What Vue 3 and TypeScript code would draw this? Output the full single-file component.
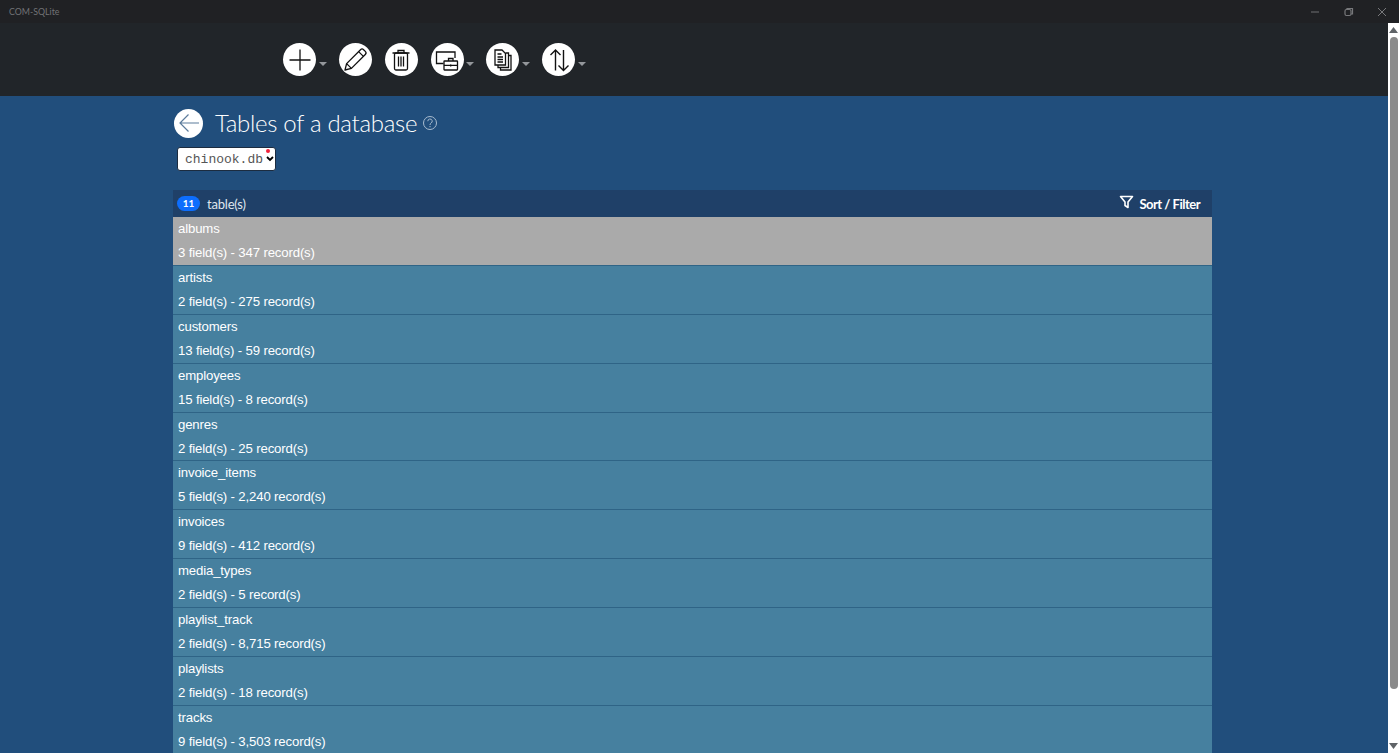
<template>
  <div class="window">
    <div class="titlebar">
      <span class="app-name">COM-SQLite</span>
      <div class="win-buttons">
        <svg width="10" height="10" viewBox="0 0 10 10"><path d="M0 5h8" stroke="#6f7073" fill="none" /></svg>
        <svg width="10" height="10" viewBox="0 0 10 10" fill="none" stroke="#77787b" stroke-width="1.2"><rect x="1" y="2.5" width="6" height="6" rx="1.5" /><path d="M3 2.5V1.5h5.5V7H7" /></svg>
        <svg width="10" height="10" viewBox="0 0 10 10"><path d="M1 1l8 8M9 1l-8 8" stroke="#77787b" fill="none" /></svg>
      </div>
    </div>
    <div class="page">
      <div class="content">
        <div class="toolbar">
          <div class="tool-group">
            <div class="tool" v-for="t in tools" :key="t.name" :class="{ caret: t.caret }">
              <span class="circle">
                <svg v-if="t.name === 'add'" width="30" height="30" viewBox="0 0 30 30" fill="none" stroke="#111" stroke-width="1.3"><path d="M15 4.5v21M4.5 15h21" /></svg>
                <svg v-else-if="t.name === 'edit'" width="30" height="30" viewBox="0 0 30 30" fill="none" stroke="#111" stroke-width="1.3" stroke-linejoin="round"><path d="M5 25l1.6-6.4L20.5 4.7a2.2 2.2 0 0 1 3.1 0l1.7 1.7a2.2 2.2 0 0 1 0 3.1L11.4 23.4z" /><path d="M6.6 18.6l4.8 4.8M18.6 6.6l4.8 4.8" /></svg>
                <svg v-else-if="t.name === 'delete'" width="30" height="30" viewBox="0 0 30 30" fill="none" stroke="#111" stroke-width="1.3"><path d="M6.5 8h17M12 8V5.5h6V8" /><rect x="8.5" y="8" width="13" height="17" rx="1.5" /><path d="M12.5 11.5v10M15 11.5v10M17.5 11.5v10" /></svg>
                <svg v-else-if="t.name === 'export'" width="30" height="30" viewBox="0 0 30 30" fill="none" stroke="#111" stroke-width="1.3"><path d="M11.5 18.5H4.5V7h18.5v6" /><rect x="12" y="16" width="13.5" height="9" rx="0.5" /><path d="M16.5 16v-2.5h4.5V16M12 20.3h13.5" /><path d="M18.7 19.5v2" /></svg>
                <svg v-else-if="t.name === 'copy'" width="30" height="30" viewBox="0 0 30 30" fill="none" stroke="#111" stroke-width="1.3"><path d="M7 5h7l3.5 3.5V20H7z" /><path d="M17.5 8h3v14.5H10V20M20.5 10.5h2.5V25H12.5v-2.5" /><path d="M9.5 9h4M9.5 12h5.5M9.5 14.5h5.5M9.5 17h5.5" /></svg>
                <svg v-else width="30" height="30" viewBox="0 0 30 30" fill="none" stroke="#111" stroke-width="1.4"><path d="M11.5 25.5V5M6.5 10l5-5 5 5M19.5 5v20.5M14.5 20.5l5 5 5-5" /></svg>
              </span>
            </div>
          </div>
        </div>
        <main class="main">
          <div class="heading">
            <span class="back">
              <svg width="24" height="24" viewBox="0 0 24 24" fill="none" stroke="#5d7c9c" stroke-width="1.2"><path d="M22 12H3M11.5 3.5L3 12l8.5 8.5" /></svg>
            </span>
            <h1>Tables of a database</h1>
            <svg class="help" width="16" height="16" viewBox="0 0 16 16" fill="none" stroke="#a9bccf"><circle cx="8" cy="8" r="6.5" /><path d="M5.8 6.2a2.2 2.2 0 1 1 3.3 1.9C8.3 8.6 8 9 8 10M8 11v1.2" /></svg>
          </div>
          <div class="db-select">
            <span class="db-name">chinook.db</span>
            <svg width="8" height="6" viewBox="0 0 8 6" fill="none" stroke="#000" stroke-width="1.8"><path d="M1 1l3 3 3-3" /></svg>
            <i class="dot"></i>
          </div>
          <div class="list-head">
            <span class="badge">11</span>
            <span class="count-label">table(s)</span>
            <span class="sort">
              <svg width="15" height="14" viewBox="0 0 15 14" fill="none" stroke="#fff" stroke-width="1.6" stroke-linejoin="round"><path d="M1.5 1.5h12L9 7v5.5L6 10.5V7z" /></svg>
              Sort / Filter
            </span>
          </div>
          <div class="row" v-for="(r, i) in rows" :key="r[0]" :class="{ active: i === 0 }">
            <div>{{ r[0] }}</div>
            <div>{{ r[1] }}</div>
          </div>
        </main>
      </div>
      <div class="scrollbar">
        <svg width="9" height="6" viewBox="0 0 9 6"><path d="M4.5 0L9 6H0z" fill="#5f6367" /></svg>
        <div class="track"><div class="thumb"></div></div>
        <svg width="9" height="6" viewBox="0 0 9 6"><path d="M0 0h9L4.5 6z" fill="#5f6367" /></svg>
      </div>
    </div>
  </div>
</template>

<script setup lang="ts">
const tools = [
  { name: 'add', caret: true },
  { name: 'edit', caret: false },
  { name: 'delete', caret: false },
  { name: 'export', caret: true },
  { name: 'copy', caret: true },
  { name: 'sort', caret: true }
]

const rows: [string, string][] = [
  ['albums', '3 field(s) - 347 record(s)'],
  ['artists', '2 field(s) - 275 record(s)'],
  ['customers', '13 field(s) - 59 record(s)'],
  ['employees', '15 field(s) - 8 record(s)'],
  ['genres', '2 field(s) - 25 record(s)'],
  ['invoice_items', '5 field(s) - 2,240 record(s)'],
  ['invoices', '9 field(s) - 412 record(s)'],
  ['media_types', '2 field(s) - 5 record(s)'],
  ['playlist_track', '2 field(s) - 8,715 record(s)'],
  ['playlists', '2 field(s) - 18 record(s)'],
  ['tracks', '9 field(s) - 3,503 record(s)']
]
</script>

<style>
html, body {
  margin: 0;
  overflow: hidden;
}
</style>

<style scoped>
.window {
  width: 1399px;
  height: 753px;
  display: flex;
  flex-direction: column;
  overflow: hidden;
  background: #214e7c;
  font-family: Lato, "Open Sans", sans-serif;
}

.titlebar {
  height: 23px;
  flex: none;
  background: #202124;
  display: flex;
  align-items: center;
  justify-content: space-between;
  padding-left: 9px;
}

.app-name {
  font-size: 8.8px;
  color: #727376;
}

.win-buttons {
  display: flex;
  gap: 23px;
  padding-right: 12px;
}

.page {
  flex: 1;
  min-height: 0;
  display: flex;
}

.content {
  flex: 1;
  min-width: 0;
  overflow: hidden;
}

.toolbar {
  height: 73px;
  background: #212529;
  display: flex;
  align-items: center;
  padding-left: 283px;
}

.tool-group {
  display: flex;
  gap: 13px;
}

.tool {
  display: flex;
  align-items: center;
}

.tool.caret {
  padding-right: 9.7px;
  position: relative;
}

.tool.caret::after {
  content: "";
  position: absolute;
  right: -1px;
  top: 19px;
  border-left: 4px solid transparent;
  border-right: 4px solid transparent;
  border-top: 4px solid #94979b;
}

.circle {
  width: 33px;
  height: 33px;
  border-radius: 50%;
  background: #fff;
  display: flex;
  align-items: center;
  justify-content: center;
}

.main {
  width: 1039px;
  margin-left: 173px;
}

.heading {
  height: 51px;
  padding-top: 3px;
  box-sizing: border-box;
  display: flex;
  align-items: center;
  padding-left: 1px;
}

.back {
  width: 29px;
  height: 29px;
  border-radius: 50%;
  background: #fff;
  display: flex;
  align-items: center;
  justify-content: center;
}

h1 {
  margin: 0 0 0 12px;
  font-size: 24px;
  letter-spacing: -0.3px;
  font-weight: 300;
  color: #fff;
  line-height: 1;
}

.help {
  margin-left: 5px;
}

.db-select {
  position: relative;
  width: 99px;
  height: 24px;
  margin-left: 4px;
  box-sizing: border-box;
  background: #fff;
  border: 1px solid #1c2c40;
  border-radius: 3px;
  display: flex;
  align-items: center;
  padding-left: 7px;
  gap: 3px;
}

.db-name {
  font-family: "Liberation Mono", monospace;
  font-size: 13px;
  color: #555;
}

.dot {
  position: absolute;
  top: 1px;
  right: 5px;
  width: 4px;
  height: 4px;
  border-radius: 50%;
  background: #f0223a;
}

.list-head {
  margin-top: 19px;
  height: 27px;
  background: #1f4068;
  display: flex;
  align-items: center;
  padding: 0 12px 0 4px;
  color: #dfe6ee;
}

.badge {
  width: 23px;
  height: 15px;
  border-radius: 8px;
  background: #0d6efd;
  color: #fff;
  font-size: 10px;
  font-weight: 700;
  line-height: 15px;
  text-align: center;
}

.count-label {
  margin-left: 7px;
  font-size: 13px;
  letter-spacing: -0.2px;
}

.sort {
  margin-left: auto;
  display: flex;
  align-items: center;
  gap: 5px;
  color: #fff;
  font-size: 13px;
  letter-spacing: -0.5px;
  font-weight: 700;
}

.sort svg {
  margin-top: -4px;
}

.row {
  height: 48.9px;
  box-sizing: border-box;
  background: #46809f;
  border-bottom: 1px solid #2f6486;
  color: #fff;
  padding: 0 5px;
  font-family: "Liberation Sans", sans-serif;
  font-size: 13.2px;
  letter-spacing: -0.15px;
  line-height: 24px;
}

.row.active {
  background: #aaaaaa;
}

.scrollbar {
  width: 11px;
  flex: none;
  background: #fff;
  display: flex;
  flex-direction: column;
  align-items: center;
  padding: 4px 0;
  box-sizing: border-box;
}

.track {
  flex: 1;
  width: 100%;
  padding: 4px 0 0;
  box-sizing: border-box;
}

.thumb {
  width: 8px;
  height: 652px;
  margin: 0 auto;
  border-radius: 4px;
  background: #8a8a8a;
}
</style>
